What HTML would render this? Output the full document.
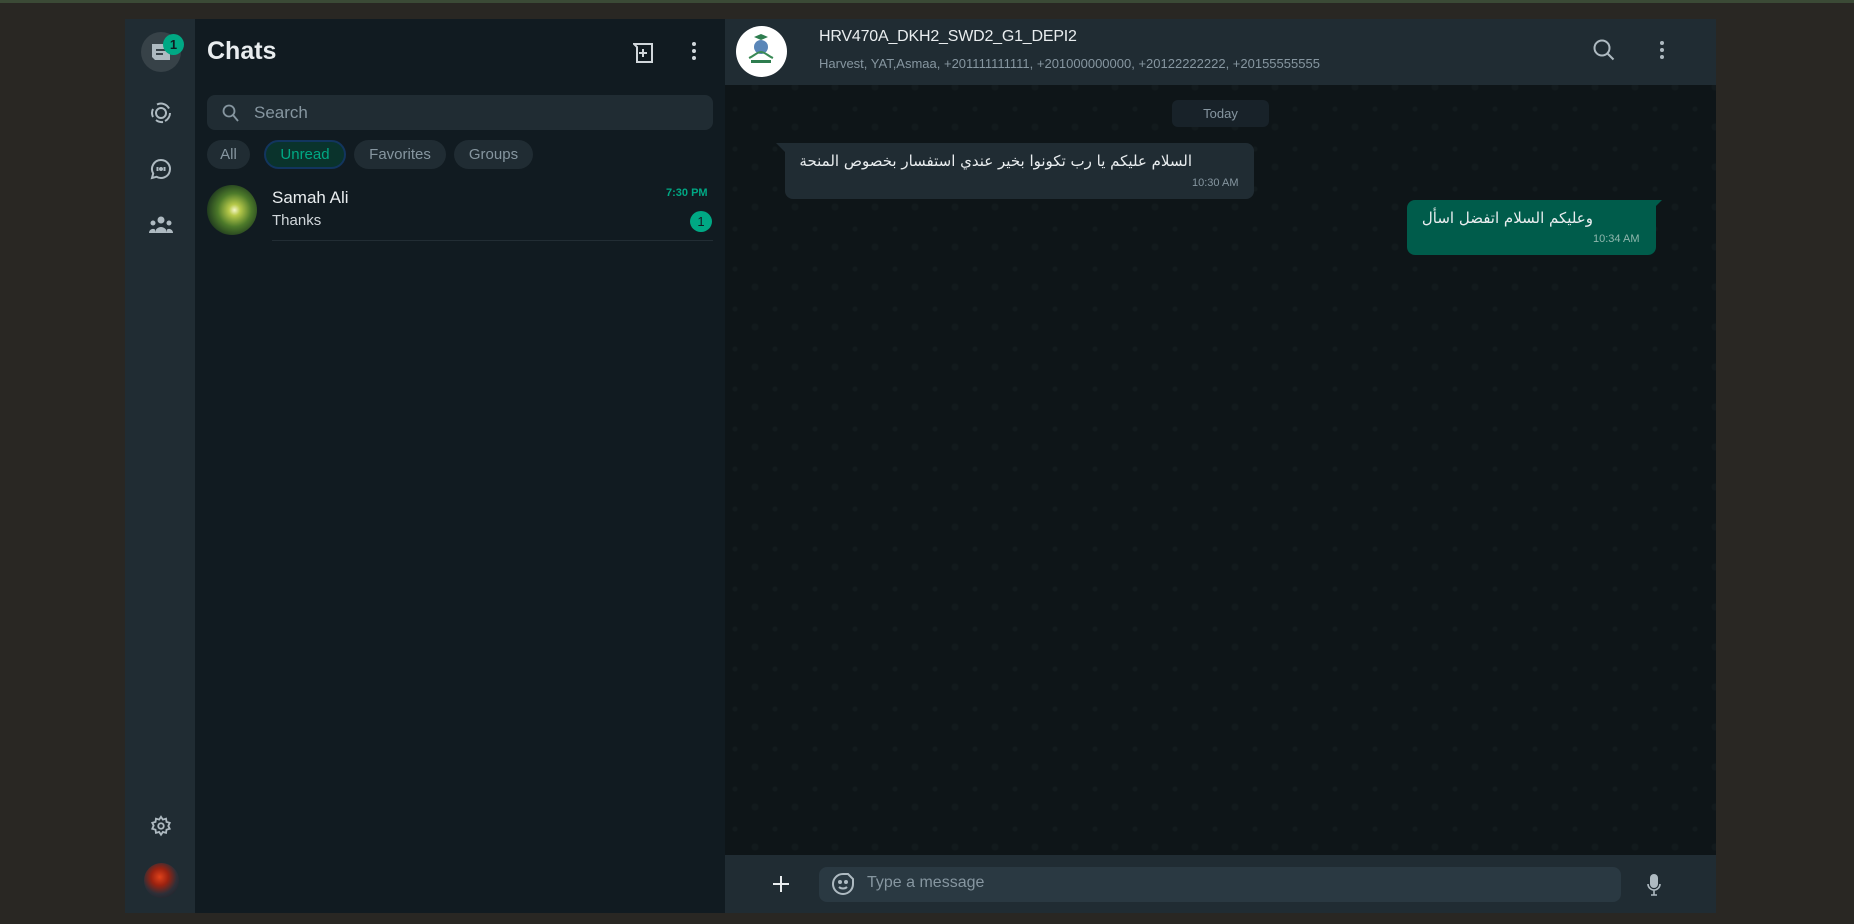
<!DOCTYPE html>
<html><head><meta charset="utf-8"><style>
*{margin:0;padding:0;box-sizing:border-box}
body{width:1854px;height:924px;background:#292723;position:relative;overflow:hidden;font-family:"Liberation Sans","Noto Sans CJK SC",sans-serif}
.topline{position:absolute;left:0;top:0;width:1854px;height:3px;background:#3b4a36}
.abs{position:absolute}
.rail{left:125px;top:19px;width:70px;height:894px;background:#202c33}
.list{left:195px;top:19px;width:530px;height:894px;background:#111b21}
.chat{left:725px;top:19px;width:991px;height:894px;background:#0e1518;
background-image:radial-gradient(circle at 10px 10px,#131b1e 2px,transparent 3px),radial-gradient(circle at 30px 28px,#121a1d 3px,transparent 4px);background-size:40px 40px}
.hdr{left:725px;top:19px;width:991px;height:66px;background:#202c33}
.ftr{left:725px;top:855px;width:991px;height:58px;background:#202c33}
.pill{position:absolute;top:140px;height:29px;border-radius:15px;background:#202c33;color:#8696a0;font-size:15px;line-height:29px;text-align:center}
.ic{position:absolute}
.ar{white-space:nowrap;direction:rtl;text-align:right;color:#e9edef;font-size:15px;font-family:'DejaVu Sans',sans-serif}
</style></head><body>
<div class="topline"></div>
<div class="abs rail"></div>
<div class="abs list"></div>
<div class="abs chat"></div>
<div class="abs hdr"></div>
<div class="abs ftr"></div>

<div class="abs" style="left:141px;top:32px;width:40px;height:40px;border-radius:50%;background:#374248"></div>
<svg class="ic" style="left:150px;top:42px" width="22" height="20" viewBox="0 0 22 20"><path d="M2 2h18v16H5L2 15z" fill="#aebac1"/><path d="M6 8h10M6 12h7" stroke="#374248" stroke-width="2"/></svg>
<div class="abs" style="left:163px;top:34px;width:21px;height:21px;border-radius:50%;background:#00a884;color:#111b21;font-size:13px;font-weight:bold;text-align:center;line-height:21px">1</div>
<svg class="ic" style="left:149px;top:101px" width="24" height="24" viewBox="0 0 24 24" fill="none" stroke="#aebac1" stroke-width="2"><circle cx="12" cy="12" r="5"/><path d="M4 16a9 9 0 0 1 0-8M8 3.5a9 9 0 0 1 12 4M21 12a9 9 0 0 1-5 8M14 21a9 9 0 0 1-7-2"/></svg>
<svg class="ic" style="left:149px;top:157px" width="24" height="24" viewBox="0 0 24 24" fill="none" stroke="#aebac1" stroke-width="2"><path d="M12 3a9 9 0 1 1-4.5 16.8L3 21l1.2-4.5A9 9 0 0 1 12 3z"/><circle cx="12" cy="12" r="1" fill="#aebac1"/><path d="M8.5 10v4M15.5 10v4"/></svg>
<svg class="ic" style="left:148px;top:214px" width="26" height="22" viewBox="0 0 26 22" fill="#aebac1"><circle cx="13" cy="6" r="3.5"/><circle cx="5" cy="9" r="2.5"/><circle cx="21" cy="9" r="2.5"/><path d="M7 19a6 6 0 0 1 12 0z"/><path d="M1 19a4 4 0 0 1 6-3.5V19zM25 19a4 4 0 0 0-6-3.5V19z"/></svg>
<svg class="ic" style="left:150px;top:815px" width="22" height="22" viewBox="0 0 24 24" fill="none" stroke="#aebac1" stroke-width="2"><circle cx="12" cy="12" r="3"/><path d="M12 2l2 3 3.5-1 .5 3.5 3.5 1-1.5 3.5 1.5 3-3.5 1-.5 3.5-3.5-1-2 3-2-3-3.5 1-.5-3.5-3.5-1 1.5-3.5L2.5 8.5 6 7.5 6.5 4 10 5z"/></svg>
<div class="abs" style="left:144px;top:863px;width:35px;height:35px;border-radius:50%;background:radial-gradient(circle at 45% 40%,#e0421a 0,#9b2210 30%,#2d2f38 60%,#1a1c22 100%)"></div>

<div class="abs" style="left:207px;top:37px;color:#e9edef;font-size:25px;font-weight:bold">Chats</div>
<svg class="ic" style="left:633px;top:43px" width="22" height="20" viewBox="0 0 22 20" fill="none" stroke="#d1d7db" stroke-width="2"><path d="M1 1h18v18H4V4z"/><path d="M10 6v8M6 10h8"/></svg>
<svg class="ic" style="left:690px;top:40px" width="8" height="22" viewBox="0 0 8 22" fill="#d1d7db"><circle cx="4" cy="4" r="2"/><circle cx="4" cy="11" r="2"/><circle cx="4" cy="18" r="2"/></svg>
<div class="abs" style="left:207px;top:95px;width:506px;height:35px;border-radius:8px;background:#202c33"></div>
<svg class="ic" style="left:222px;top:104px" width="17" height="18" viewBox="0 0 17 18" fill="none" stroke="#8696a0" stroke-width="1.8"><circle cx="7" cy="7" r="5.5"/><path d="M11 11l5 6"/></svg>
<div class="abs" style="left:254px;top:103px;color:#8696a0;font-size:17px">Search</div>
<div class="pill" style="left:207px;width:43px">All</div>
<div class="pill" style="left:264px;width:82px;background:#0a332c;color:#00a884;border:2px solid #12355e;line-height:25px">Unread</div>
<div class="pill" style="left:354px;width:92px">Favorites</div>
<div class="pill" style="left:454px;width:79px">Groups</div>
<div class="abs" style="left:207px;top:185px;width:50px;height:50px;border-radius:50%;background:radial-gradient(circle at 55% 50%,#f5f6c8 0,#b7c94a 15%,#4d7a2a 45%,#1f3a1e 75%,#2e4c6a 100%)"></div>
<div class="abs" style="left:272px;top:188px;color:#e9edef;font-size:17px">Samah Ali</div>
<div class="abs" style="left:272px;top:212px;color:#d1d7db;font-size:15px">Thanks</div>
<div class="abs" style="left:666px;top:187px;color:#00a884;font-size:11px;font-weight:bold">7:30 PM</div>
<div class="abs" style="left:690px;top:211px;width:22px;height:21px;border-radius:50%;background:#00a884;color:#111b21;font-size:13px;text-align:center;line-height:21px">1</div>
<div class="abs" style="left:272px;top:240px;width:441px;height:1px;background:#222d34"></div>

<div class="abs" style="left:736px;top:26px;width:51px;height:51px;border-radius:50%;background:#fff"></div>
<svg class="ic" style="left:746px;top:30px" width="30" height="36" viewBox="0 0 30 36"><circle cx="15" cy="17" r="7" fill="#5a86b8"/><path d="M8 7l7-3 7 3-7 3z" fill="#2e7d4f"/><path d="M3 28c5-2 8-6 12-6s7 4 12 6" stroke="#3a8a55" stroke-width="2" fill="none"/><rect x="5" y="30" width="20" height="3" fill="#2e7d4f"/></svg>
<div class="abs" style="left:819px;top:28px;color:#e9edef;font-size:16px;letter-spacing:-0.2px">HRV470A_DKH2_SWD2_G1_DEPI2</div>
<div class="abs" style="left:819px;top:56px;color:#8696a0;font-size:13px">Harvest, YAT,Asmaa, +201111111111, +201000000000, +20122222222, +20155555555</div>
<svg class="ic" style="left:1592px;top:38px" width="24" height="24" viewBox="0 0 24 24" fill="none" stroke="#aebac1" stroke-width="2"><circle cx="10" cy="10" r="7.5"/><path d="M15.5 15.5l6 6"/></svg>
<svg class="ic" style="left:1658px;top:39px" width="8" height="22" viewBox="0 0 8 22" fill="#aebac1"><circle cx="4" cy="4" r="2"/><circle cx="4" cy="11" r="2"/><circle cx="4" cy="18" r="2"/></svg>

<div class="abs" style="left:1172px;top:100px;width:97px;height:27px;border-radius:6px;background:#182229;color:#8696a0;font-size:13px;text-align:center;line-height:27px">Today</div>
<svg class="ic" style="left:776px;top:143px" width="14" height="14"><path d="M0 0h14v14z" fill="#202c33"/></svg>
<div class="abs" style="left:785px;top:143px;width:469px;height:56px;border-radius:0 8px 8px 8px;background:#202c33"></div>
<div class="abs ar" style="right:662px;top:152px">السلام عليكم يا رب تكونوا بخير عندي استفسار بخصوص المنحة</div>
<div class="abs" style="left:1192px;top:177px;color:#8696a0;font-size:11px">10:30 AM</div>
<svg class="ic" style="left:1648px;top:200px" width="14" height="14"><path d="M0 0h14L0 14z" fill="#005c4b"/></svg>
<div class="abs" style="left:1407px;top:200px;width:249px;height:55px;border-radius:8px 0 8px 8px;background:#005c4b"></div>
<div class="abs ar" style="right:261px;top:209px">وعليكم السلام اتفضل اسأل</div>
<div class="abs" style="left:1593px;top:233px;color:#8fb7ad;font-size:11px">10:34 AM</div>

<svg class="ic" style="left:773px;top:876px" width="16" height="16" viewBox="0 0 16 16" stroke="#e9edef" stroke-width="2"><path d="M8 0v16M0 8h16"/></svg>
<div class="abs" style="left:819px;top:867px;width:802px;height:35px;border-radius:8px;background:#2a3942"></div>
<svg class="ic" style="left:832px;top:873px" width="22" height="22" viewBox="0 0 22 22" fill="none" stroke="#aebac1" stroke-width="2"><path d="M11 1a10 10 0 1 0 10 10V6l-5-5z"/><circle cx="8" cy="9" r="1" fill="#aebac1"/><circle cx="14" cy="9" r="1" fill="#aebac1"/><path d="M7 14c2 2 6 2 8 0"/></svg>
<div class="abs" style="left:867px;top:874px;color:#8696a0;font-size:16px">Type a message</div>
<svg class="ic" style="left:1646px;top:873px" width="16" height="24" viewBox="0 0 16 24"><rect x="4" y="1" width="8" height="14" rx="4" fill="#aebac1"/><path d="M2 11a6 6 0 0 0 12 0M8 17v5M5 22h6" stroke="#aebac1" stroke-width="1.6" fill="none"/></svg>
</body></html>
